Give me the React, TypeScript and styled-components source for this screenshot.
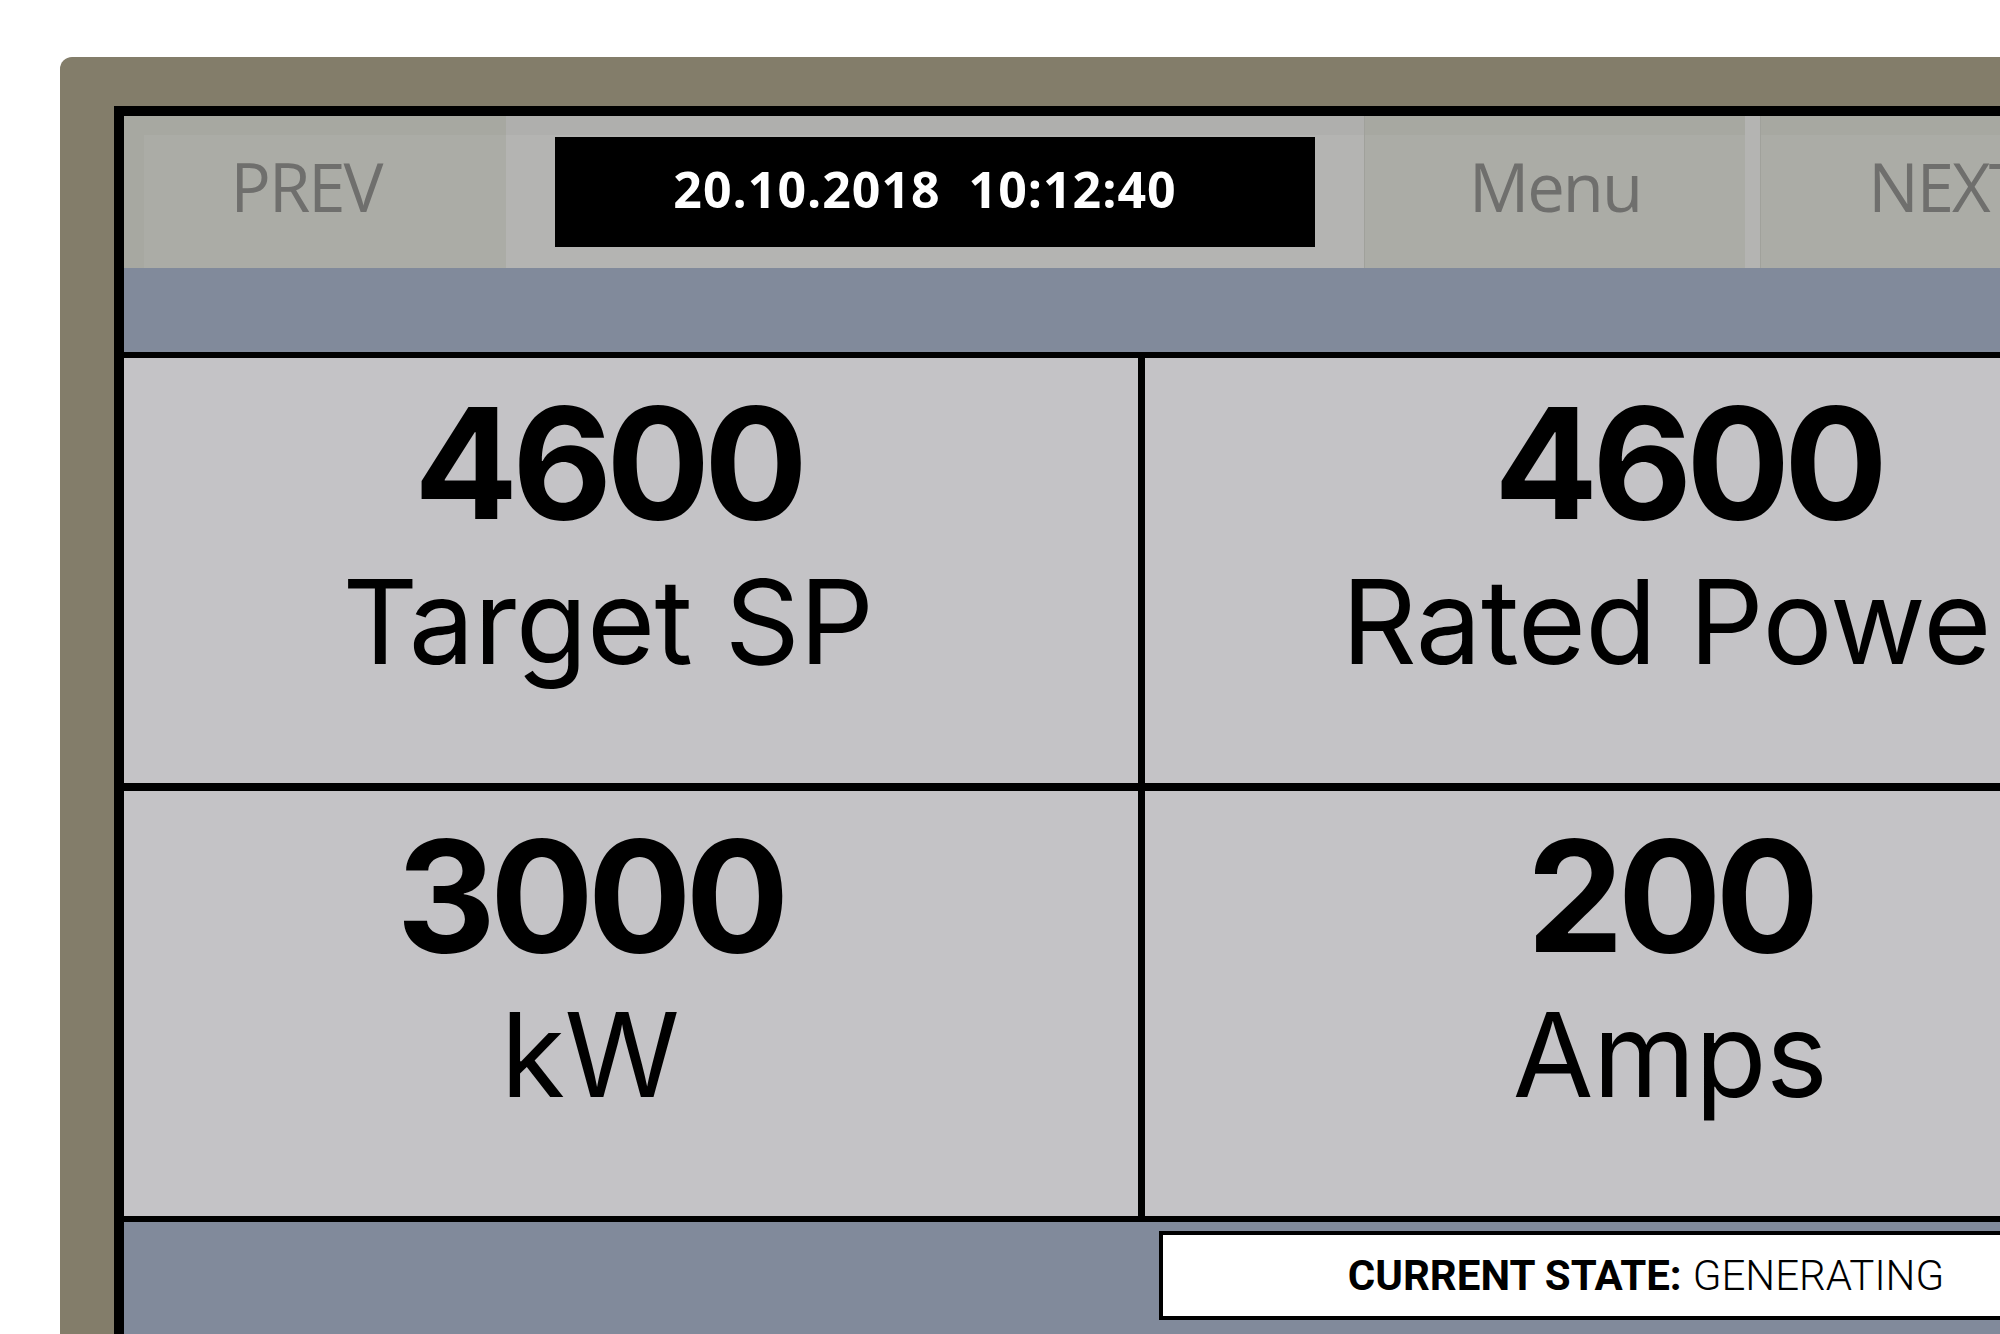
import React from 'react'
import styled, { createGlobalStyle } from 'styled-components'

type Reading = {
  value: string;
  label: string;
  shift: number;
}

// shift nudges the centred text left (negative) or right (positive)
const readings: Reading[] = [
  { value: '4600', label: 'Target SP', shift: -23 },
  { value: '4600', label: 'Rated Power', shift: 8 },
  { value: '3000', label: 'kW', shift: -41 },
  { value: '200', label: 'Amps', shift: -10 },
]

const App = () => {
  return (
    <Page>
      <GlobalStyle />
      <Bezel>
        <Screen>
          <TopBar>
            <NavButton $edge $shift={-18}>PREV</NavButton>
            <DateArea>
              <DateBox>20.10.2018  10:12:40</DateBox>
            </DateArea>
            <NavButton>Menu</NavButton>
            <Spacer />
            <NavButton $shift={-10}>NEXT</NavButton>
          </TopBar>
          <Band />
          <ReadingGrid>
            {readings.map((r, i) => (
              <ReadingCell key={i} $shift={r.shift}>
                <ReadingValue>{r.value}</ReadingValue>
                <ReadingLabel>{r.label}</ReadingLabel>
              </ReadingCell>
            ))}
          </ReadingGrid>
          <StatusBand>
            <StatusBox>
              <StatusKey>CURRENT STATE:</StatusKey>
              <StatusValue>GENERATING</StatusValue>
            </StatusBox>
          </StatusBand>
        </Screen>
      </Bezel>
    </Page>
  )
}

const GlobalStyle = createGlobalStyle`
  html, body {
    margin: 0;
    padding: 0;
    background: #ffffff;
    overflow: hidden;
  }
`

const Page = styled.div`
  width: 2000px;
  height: 1334px;
  overflow: hidden;
  padding: 57px 0 0 60px;
  box-sizing: border-box;
`

const Bezel = styled.div`
  width: 2060px;
  height: 1400px;
  background-color: #837d6a;
  border-top-left-radius: 12px;
  padding: 49px 0 0 54px;
  box-sizing: border-box;
`

const Screen = styled.div`
  height: 1300px;
  border-top: 10px solid #000000;
  border-left: 10px solid #000000;
  background-color: #818a9b;
  display: flex;
  flex-direction: column;
`

const TopBar = styled.div`
  height: 152px;
  display: grid;
  grid-template-columns: 382px 858px 381px 15px 381px;
  background-color: #b4b4b2;
  box-shadow: inset 0 19px 0 rgba(0, 0, 0, 0.025);
`

const NavButton = styled.div<{ $edge?: boolean; $shift?: number }>`
  display: flex;
  align-items: center;
  justify-content: center;
  padding: 0 0 12px ${p => (p.$shift && p.$shift > 0 ? p.$shift : 0)}px;
  padding-right: ${p => (p.$shift && p.$shift < 0 ? -p.$shift : 0)}px;
  background-color: #abaca6;
  border-left: ${p => (p.$edge ? '0' : '1px solid #a0a19b')};
  box-shadow: inset ${p => (p.$edge ? '20px' : '0')} 19px 0 #a7a8a1;
  font-family: "Open Sans", "Liberation Sans", sans-serif;
  font-size: 67px;
  font-weight: 400;
  letter-spacing: -2px;
  color: #6f6f6d;
`

const Spacer = styled.div`
  background-color: #b4b4b2;
`

const DateArea = styled.div`
  display: flex;
  align-items: center;
  justify-content: center;
`

const DateBox = styled.div`
  width: 760px;
  height: 110px;
  box-sizing: border-box;
  padding: 0 20px 7px 0;
  background-color: #000000;
  display: flex;
  align-items: center;
  justify-content: center;
  white-space: pre;
  font-family: "Open Sans", "Liberation Sans", sans-serif;
  font-size: 50px;
  font-weight: 700;
  letter-spacing: 1px;
  color: #ffffff;
`

const Band = styled.div`
  height: 84px;
  background-color: #818a9b;
`

const ReadingGrid = styled.div`
  display: grid;
  grid-template-columns: 1014px 1070px;
  grid-template-rows: 425px 425px;
  column-gap: 7px;
  row-gap: 8px;
  padding: 6px 0;
  background-color: #000000;
`

const ReadingCell = styled.div<{ $shift: number }>`
  background-color: #c4c3c6;
  display: flex;
  flex-direction: column;
  align-items: center;
  padding-top: 28px;
  padding-left: ${p => Math.max(p.$shift, 0) * 2}px;
  padding-right: ${p => Math.max(-p.$shift, 0) * 2}px;
  overflow: hidden;
  white-space: nowrap;
  font-family: Inter, "Liberation Sans", sans-serif;
  color: #000000;
`

const ReadingValue = styled.div`
  font-size: 154px;
  font-weight: 700;
  letter-spacing: -6px;
  line-height: 1;
`

const ReadingLabel = styled.div`
  margin-top: 23px;
  font-size: 117px;
  font-weight: 400;
  letter-spacing: -0.5px;
  line-height: 1;
`

const StatusBand = styled.div`
  flex: 1;
  padding: 9px 0 0 1035px;
  background-color: #818a9b;
`

const StatusBox = styled.div`
  width: 974px;
  height: 89px;
  box-sizing: border-box;
  border: 4px solid #000000;
  background-color: #ffffff;
  display: flex;
  align-items: center;
  justify-content: center;
  gap: 11px;
  font-family: Roboto, "Liberation Sans", sans-serif;
  font-size: 42px;
  color: #000000;
`

const StatusKey = styled.span`
  font-weight: 700;
`

const StatusValue = styled.span`
  font-weight: 300;
`

export default App
